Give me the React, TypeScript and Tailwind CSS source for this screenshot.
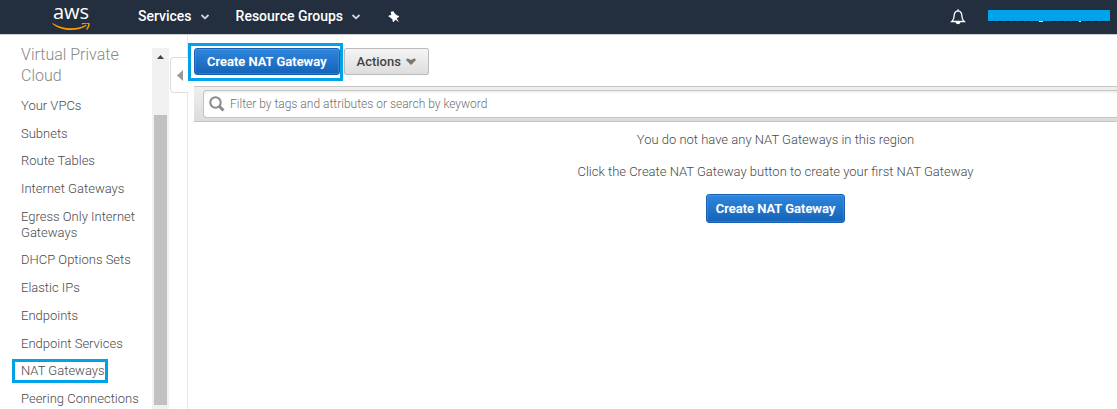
import type { ReactNode } from 'react';

const NAV_ITEMS = [
  'Your VPCs',
  'Subnets',
  'Route Tables',
  'Internet Gateways',
  'Egress Only Internet Gateways',
  'DHCP Options Sets',
  'Elastic IPs',
  'Endpoints',
  'Endpoint Services',
  'NAT Gateways',
  'Peering Connections',
];

function AwsLogo() {
  return (
    <a href="#home" aria-label="AWS home" className="flex w-10 flex-col items-center text-white">
      <span className="font-['Open_Sans',sans-serif] text-[20px] leading-[22px] font-medium">aws</span>
      <svg viewBox="0 0 38 10" className="h-[10px] w-[38px] shrink-0" fill="none" aria-hidden="true">
        <path d="M1 .2c9.500 6 23 6.500 32.500 1.700.8-.4 1.400.5.700 1.100C25 9.200 9 8.200.6 1c-.5-.5 0-1.100.4-.8Z" fill="#f90" />
        <path d="M30 .9c2-1.100 6.100-1.100 6.700-.4.500.7-.2 4.400-2.100 6" stroke="#f90" strokeWidth="1.500" />
      </svg>
    </a>
  );
}

function Chevron() {
  return (
    <svg viewBox="0 0 10 6" className="h-[6px] w-[10px]" fill="none" stroke="#d5d9dd" strokeWidth="1.800" aria-hidden="true">
      <path d="M1.500 1 5 4.300 8.500 1" />
    </svg>
  );
}

function Header() {
  return (
    <header className="flex h-[35px] items-center border-b border-[#cfcdd4] bg-[#232f3e] pr-[7px] pl-[51px] text-[14px] font-medium text-white">
      <AwsLogo />
      <nav className="ml-[47px] flex items-center pb-[1px]">
        <button type="button" className="flex items-center gap-2">
          Services <Chevron />
        </button>
        <button type="button" className="ml-[26px] flex items-center gap-2">
          Resource Groups <Chevron />
        </button>
        <button type="button" aria-label="Pin shortcuts" className="ml-[27px]">
          <svg viewBox="0 0 12 12" className="size-3" fill="#fff" aria-hidden="true">
            <path d="M2.700.8 5.700.3 6 1.500 9 4.500l1.800.2.300 1L8.700 7.500l2.400 3.800-3.600-2.600-2 2.200-1-.3.100-2L1.500 6l-1-.3L.8 4.500l2.400-.6Z" />
          </svg>
        </button>
      </nav>
      <button type="button" aria-label="Notifications" className="ml-auto">
        <svg viewBox="0 0 16 16" className="size-4" fill="none" stroke="#fff" strokeWidth="1.300" aria-hidden="true">
          <path d="M8 1.800C5.300 2 4.300 4 4.200 6.500 4.100 9.300 3.500 11 1.800 12.500h12.400C12.500 11 11.900 9.300 11.800 6.500 11.700 4 10.700 2 8 1.800Z" />
          <path d="M8 .2v1.600" />
          <path d="M6.300 13.300h3.400c-.3 1.700-3.100 1.700-3.400 0Z" fill="#fff" />
        </svg>
      </button>
      <button type="button" aria-label="Account" className="ml-[22px] flex flex-col pb-[1px]">
        <span className="h-[11px] w-[122px] bg-[#00a2e8]" />
        <svg viewBox="0 0 122 2" className="h-[2px] w-[122px]" aria-hidden="true">
          <path d="M3 .5h45M64 .5h17M84 .5h37" stroke="#101820" strokeDasharray="5 2" />
          <path d="M51 .5h4M91 .5h2" stroke="#e8e4d8" />
        </svg>
      </button>
    </header>
  );
}

function Sidebar() {
  return (
    <aside className="flex w-[188px] shrink-0 border-r border-[#e8e8e8]">
      <div className="min-w-0 flex-1 pt-[9px] pl-[21px] font-light text-[#4a4a4a]">
        <h2 className="text-[16px] leading-[21px] text-[#888]">Virtual Private Cloud</h2>
        <ul className="mt-3 flex h-[309px] flex-col justify-between text-[13px] leading-4">
          {NAV_ITEMS.map((item) => (
            <li key={item} className="relative pr-3">
              <a href="#section">{item}</a>
              {item === 'NAT Gateways' && (
                <span className="pointer-events-none absolute -top-1 -left-[9px] h-6 w-[96px] border-3 border-[#00a2e8]" />
              )}
            </li>
          ))}
        </ul>
      </div>
      <div className="mt-[13px] flex w-[17px] shrink-0 flex-col items-center bg-[#f1f1f1] pb-1" aria-hidden="true">
        <svg viewBox="0 0 7 4" className="mt-[7px] h-1 w-[7px] shrink-0" fill="#444">
          <path d="M3.500 0 7 4H0Z" />
        </svg>
        <span className="mt-14 w-[13px] flex-1 bg-[#c1c1c1]" />
      </div>
      <div className="-mr-px w-[19px] shrink-0 pt-[22px] pl-[1px]">
        <button
          type="button"
          aria-label="Collapse sidebar"
          className="flex h-9 w-full items-center justify-center rounded-l-[4px] border border-r-0 border-[#ddd] bg-white"
        >
          <svg viewBox="0 0 6 11" className="h-[11px] w-[6px]" fill="#999" aria-hidden="true">
            <path d="M6 0v11L0 5.500Z" />
          </svg>
        </button>
      </div>
    </aside>
  );
}

function PrimaryButton({ wide = false, children }: { wide?: boolean; children: ReactNode }) {
  return (
    <button
      type="button"
      className={`${wide ? 'h-[27px] px-3' : 'h-[29px] px-[9px]'} block rounded-[3px] border border-[#1560b4] bg-linear-to-b from-[#2e86dc] to-[#1464b8] text-[13px] font-medium whitespace-nowrap text-white shadow-[inset_0_0_0_1px_rgba(255,255,255,0.12)] [text-shadow:0_0_1px_rgba(255,255,255,0.5)]`}
    >
      {children}
    </button>
  );
}

function Toolbar() {
  return (
    <div className="flex items-center gap-[1px] pt-2">
      <div className="border-3 border-[#00a2e8] pt-[2px] pb-[3px] pl-[3px]">
        <PrimaryButton wide>Create NAT Gateway</PrimaryButton>
      </div>
      <button
        type="button"
        className="-mt-[1px] flex h-[27px] items-center gap-[5px] rounded-[2px] border border-[#bbb] bg-linear-to-b from-[#f5f5f5] to-[#ddd] px-3 text-[13px] font-medium text-[#444]"
      >
        Actions
        <svg viewBox="0 0 10 7" className="h-[7px] w-[10px]" fill="#777" aria-hidden="true">
          <path d="M1.500.3 5 2l3.500-1.700L10 2 5 7 0 2Z" />
        </svg>
      </button>
    </div>
  );
}

function FilterBar() {
  return (
    <div className="mt-[5px] ml-[6px] border-y border-[#c4c4c4] bg-linear-to-b from-[#efefef] to-[#dcdcdc] py-[3px] pl-[9px]">
      <label className="flex h-[28px] items-center gap-[5px] rounded-l-[4px] border border-r-0 border-[#c4c4c4] bg-white pl-[5px] shadow-[inset_0_2px_2px_rgba(0,0,0,0.06)]">
        <svg viewBox="0 0 16 16" className="size-4 shrink-0" fill="none" stroke="#8a8a8a" aria-hidden="true">
          <circle cx="6.500" cy="6.500" r="5.200" strokeWidth="2" />
          <path d="m10.500 10.500 4 4" strokeWidth="3" />
        </svg>
        <input
          type="text"
          aria-label="Filter"
          placeholder="Filter by tags and attributes or search by keyword"
          className="min-w-0 flex-1 bg-transparent text-[12px] font-light outline-none placeholder:text-[#707070]"
        />
      </label>
    </div>
  );
}

export default function App() {
  return (
    <div className="flex min-h-screen flex-col bg-white font-[Roboto,'Liberation_Sans',sans-serif]">
      <Header />
      <div className="flex flex-1">
        <Sidebar />
        <main className="min-w-0 flex-1">
          <Toolbar />
          <FilterBar />
          <section className="ml-[6px] flex flex-col items-center pt-[10px] pl-60 text-[13px] leading-4 text-[#4a4a4a]">
            <p className="mb-4 font-light">You do not have any NAT Gateways in this region</p>
            <p className="mb-[14px] font-light">Click the Create NAT Gateway button to create your first NAT Gateway</p>
            <PrimaryButton>Create NAT Gateway</PrimaryButton>
          </section>
        </main>
      </div>
    </div>
  );
}
